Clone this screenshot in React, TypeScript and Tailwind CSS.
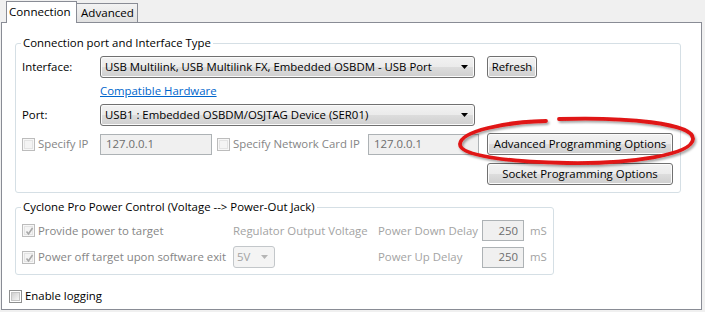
import React from "react";

function Check({ checked = false, disabled = false }: { checked?: boolean; disabled?: boolean }) {
  return (
    <span
      className={
        disabled
          ? "relative w-[13px] h-[13px] shrink-0 border border-[#bcbcbc] bg-[#f7f7f7] flex items-center justify-center"
          : "relative w-[13px] h-[13px] shrink-0 border border-[#8e8f8f] bg-white flex items-center justify-center"
      }
    >
      <span
        className={
          disabled
            ? "w-[9px] h-[9px] border border-[#e3e3e3] bg-[#f4f4f4]"
            : "w-[9px] h-[9px] border border-[#c4c4c4] bg-[linear-gradient(135deg,#cfcfcf,#f7f7f7)]"
        }
      />
      {checked && (
        <svg className="absolute left-[1px] top-[1px]" width="11" height="11" viewBox="0 0 11 11">
          <path d="M2.5 5.5 L4.5 8 L8.5 2" fill="none" stroke="#a8a8a8" strokeWidth="1.6" />
        </svg>
      )}
    </span>
  );
}

function Arrow({ color = "#000" }: { color?: string }) {
  return (
    <svg width="7" height="4" viewBox="0 0 7 4">
      <polygon points="0,0 7,0 3.5,4" fill={color} />
    </svg>
  );
}

function Select({ text, w }: { text: string; w: string }) {
  return (
    <div
      className={`${w} h-[22px] flex items-center justify-between pl-[4px] pr-[6px] border border-[#707070] rounded-[3px] bg-[linear-gradient(#f2f2f2_0%,#ebebeb_50%,#dddddd_50%,#cfcfcf_100%)] shadow-[inset_0_0_0_1px_#fbfbfb] text-black`}
    >
      <span className="whitespace-nowrap">{text}</span>
      <Arrow />
    </div>
  );
}

function Button({ text, w }: { text: string; w: string }) {
  return (
    <div
      className={`${w} h-[22px] flex items-center justify-center border border-[#707070] rounded-[3px] bg-[linear-gradient(#f2f2f2_0%,#ebebeb_50%,#dddddd_50%,#cfcfcf_100%)] shadow-[inset_0_0_0_1px_#fbfbfb] text-black whitespace-nowrap`}
    >
      {text}
    </div>
  );
}

function DisInput({ text, w, right = false }: { text: string; w: string; right?: boolean }) {
  return (
    <div
      className={`${w} h-[21px] flex items-center ${right ? "justify-end pr-[5px]" : "pl-[5px]"} border border-[#adb2b5] bg-[#f0f0f0] text-[#6d6d6d]`}
    >
      {text}
    </div>
  );
}

export default function App() {
  return (
    <div className="relative w-[705px] h-[312px] bg-[#f0f0f0] font-['Open_Sans',sans-serif] text-[11.4px] leading-[16px] text-black overflow-hidden">
      {/* tabs */}
      <div className="relative z-10 flex items-end h-[22px] pl-[6px]">
        <div className="h-[22px] w-[71px] mb-[-1px] border border-b-0 border-[#898c95] bg-white pl-[2px] pt-[2px] text-[11.6px]">
          Connection
        </div>
        <div className="h-[19px] w-[61px] border border-l-0 border-b-0 border-[#898c95] bg-[linear-gradient(#f3f3f3,#e1e1e1)] pl-[4px] pt-[1px] text-[11.6px]">
          Advanced
        </div>
      </div>

      {/* panel */}
      <div className="ml-[1px] w-[701px] h-[288px] border border-[#898c95] bg-white">
        {/* group 1 */}
        <fieldset className="ml-[13px] mt-[12px] w-[666px] border border-[#d5dfe5] rounded-[3px]">
          <legend className="ml-[5px] px-[2px] leading-[16px]">Connection port and Interface Type</legend>
          <div className="pl-[6px] pb-[7px] flex flex-col">
            <div className="mt-[5px] h-[22px] flex items-center">
              <span className="w-[78px]">Interface:</span>
              <Select w="w-[375px]" text="USB Multilink, USB Multilink FX, Embedded OSBDM - USB Port" />
              <div className="ml-[12px]">
                <Button w="w-[50px]" text="Refresh" />
              </div>
            </div>
            <div className="h-[26px] flex items-center pl-[78px]">
              <span className="text-[#0066cc] underline">Compatible Hardware</span>
            </div>
            <div className="h-[22px] flex items-center">
              <span className="w-[78px]">Port:</span>
              <Select w="w-[375px]" text="USB1 : Embedded OSBDM/OSJTAG Device (SER01)" />
            </div>
            <div className="mt-[7px] h-[22px] flex items-center">
              <div className="w-[78px] flex items-center gap-[3px] text-[#858585]">
                <Check disabled />
                <span>Specify IP</span>
              </div>
              <DisInput w="w-[112px]" text="127.0.0.1" />
              <div className="ml-[5px] w-[151px] flex items-center gap-[3px] text-[#858585]">
                <Check disabled />
                <span>Specify Network Card IP</span>
              </div>
              <DisInput w="w-[111px]" text="127.0.0.1" />
              <div className="ml-[8px]">
                <Button w="w-[186px]" text="Advanced Programming Options" />
              </div>
            </div>
            <div className="mt-[8px] pl-[465px]">
              <Button w="w-[186px]" text="Socket Programming Options" />
            </div>
          </div>
        </fieldset>

        {/* group 2 */}
        <fieldset className="ml-[13px] mt-[6px] w-[539px] border border-[#d5dfe5] rounded-[3px]">
          <legend className="ml-[5px] px-[2px] leading-[16px]">
            Cyclone Pro Power Control (Voltage --&gt; Power-Out Jack)
          </legend>
          <div className="pl-[6px] pb-[6px] flex flex-col">
            <div className="mt-[5px] h-[21px] flex items-center">
              <div className="w-[211px] flex items-center gap-[3px] text-[#858585]">
                <Check disabled checked />
                <span>Provide power to target</span>
              </div>
              <span className="w-[145px] text-[#a3a3a3]">Regulator Output Voltage</span>
              <span className="w-[104px] text-[#a3a3a3]">Power Down Delay</span>
              <DisInput w="w-[42px]" text="250" right />
              <span className="ml-[6px] text-[#a3a3a3]">mS</span>
            </div>
            <div className="mt-[5px] h-[22px] flex items-center">
              <div className="w-[211px] flex items-center gap-[3px] text-[#858585]">
                <Check disabled checked />
                <span>Power off target upon software exit</span>
              </div>
              <div className="w-[145px]">
                <div className="w-[42px] h-[22px] flex items-center justify-between pl-[3px] pr-[6px] border border-[#c3c7ca] rounded-[3px] bg-[#f4f4f4] text-[#a3a3a3]">
                  <span>5V</span>
                  <Arrow color="#b5b5b5" />
                </div>
              </div>
              <span className="w-[104px] text-[#a3a3a3]">Power Up Delay</span>
              <div className="h-[22px] flex items-center">
                <DisInput w="w-[42px]" text="250" right />
              </div>
              <span className="ml-[6px] text-[#a3a3a3]">mS</span>
            </div>
          </div>
        </fieldset>

        {/* enable logging */}
        <div className="mt-[11px] ml-[7px] h-[20px] flex items-center gap-[3px]">
          <Check />
          <span>Enable logging</span>
        </div>
      </div>

      {/* red annotation ellipse */}
      <svg
        className="absolute left-[455px] top-[108px] pointer-events-none"
        width="250"
        height="64"
        viewBox="0 0 250 64"
      >
        <defs>
          <filter id="sh" x="-10%" y="-30%" width="120%" height="160%">
            <feDropShadow dx="1.5" dy="2" stdDeviation="1.2" floodColor="#000" floodOpacity="0.35" />
          </filter>
        </defs>
        <path
          d="M104 11 C 170 9, 239 15, 238 31 C 237 47, 175 56, 112 55 C 50 54, 4 47, 5 36 C 6 23, 50 14, 91 13"
          fill="none"
          stroke="#e01414"
          strokeWidth="3.8"
          strokeLinecap="round"
          filter="url(#sh)"
        />
      </svg>
    </div>
  );
}
